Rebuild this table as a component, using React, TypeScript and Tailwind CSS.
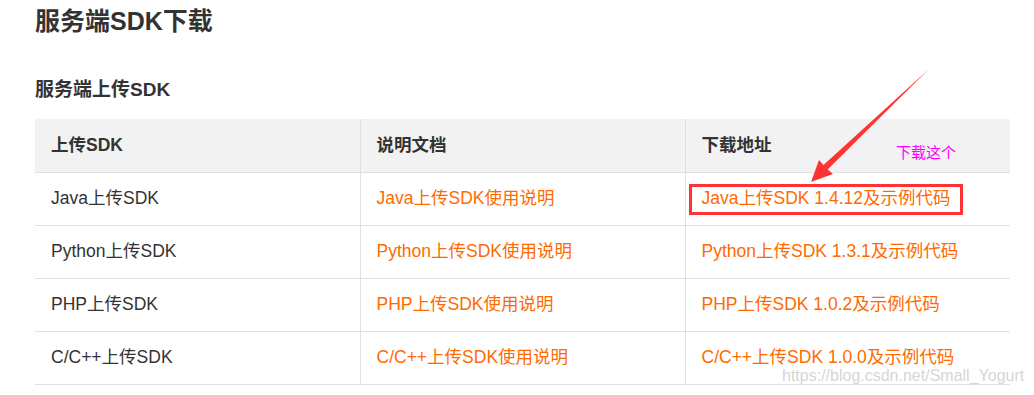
const rows = [
  { name: 'Java上传SDK', doc: 'Java上传SDK使用说明', dl: 'Java上传SDK 1.4.12及示例代码' },
  { name: 'Python上传SDK', doc: 'Python上传SDK使用说明', dl: 'Python上传SDK 1.3.1及示例代码' },
  { name: 'PHP上传SDK', doc: 'PHP上传SDK使用说明', dl: 'PHP上传SDK 1.0.2及示例代码' },
  { name: 'C/C++上传SDK', doc: 'C/C++上传SDK使用说明', dl: 'C/C++上传SDK 1.0.0及示例代码' },
]

const font = { fontFamily: '"Liberation Sans", "Noto Sans CJK SC", sans-serif' }

export default function App() {
  return (
    <div className="relative w-[1034px] h-[395px] overflow-hidden bg-white text-[#333]" style={font}>
      <div className="pl-[35px] pt-[5px]">
        <h1 className="text-[25px] leading-[32px] font-bold text-[#333]">服务端SDK下载</h1>
        <h2 className="mt-[39px] text-[19px] leading-[28px] font-bold text-[#333]">服务端上传SDK</h2>

        <table className="mt-[15px] w-[975px] border-collapse table-fixed text-[17.5px]">
          <thead>
            <tr className="bg-[#f2f2f2] h-[53px]">
              <th className="text-left font-bold pl-4 border-b border-[#e0e0e0]">上传SDK</th>
              <th className="text-left font-bold pl-4 border-b border-l border-[#e0e0e0]">说明文档</th>
              <th className="text-left font-bold pl-4 border-b border-l border-[#e0e0e0]">下载地址</th>
            </tr>
          </thead>
          <tbody>
            {rows.map((r) => (
              <tr key={r.name} className="h-[53px]">
                <td className="pl-4 border-b border-[#e0e0e0]">{r.name}</td>
                <td className="pl-4 border-b border-l border-[#e0e0e0] text-[#ff6a00]">{r.doc}</td>
                <td className="pl-4 border-b border-l border-[#e0e0e0] text-[#ff6a00]">{r.dl}</td>
              </tr>
            ))}
          </tbody>
        </table>
      </div>

      {/* annotation */}
      <div className="absolute left-[689px] top-[184px] w-[274px] h-[31px] border-[3px] border-[#f33]" />
      <span className="absolute left-[896px] top-[143px] text-[15px] leading-[20px] text-[#f0f]">下载这个</span>
      <svg className="absolute left-0 top-0" width="1034" height="395">
        <polygon
          points="811,182 819,160 823.5,165 929,69 827.6,169.4 833,174"
          fill="#f33"
        />
      </svg>

      <span className="absolute left-[782px] top-[365px] text-[16px] leading-[22px] text-[#d6d6d6] whitespace-nowrap">
        https://blog.csdn.net/Small_Yogurt
      </span>
    </div>
  )
}
